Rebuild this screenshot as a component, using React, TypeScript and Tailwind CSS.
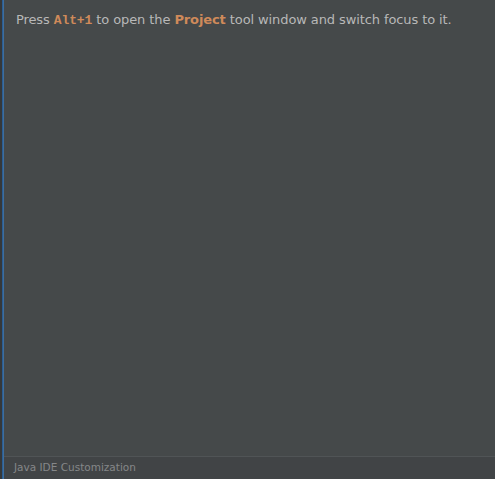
import React from 'react';

const App = () => {
  return (
    <div className="flex h-[479px] w-[495px] border-l-2 border-[#35383a] bg-[#45494a] font-['DejaVu_Sans',sans-serif]">
      <div className="w-px shrink-0 bg-[#2a5d94]" />
      <div className="w-px shrink-0 bg-[#3f6e9c]" />
      <div className="flex flex-1 flex-col">
        <div className="flex-1 pl-[12px] pt-[11px]">
          <p className="text-[13px] leading-[18px] text-[#b8b8b8] tracking-[-0.1px]">
            Press{' '}
            <span className="font-['Liberation_Mono',monospace] font-bold text-[#cf8a5a]">Alt+1</span>
            {' '}to open the{' '}
            <span className="font-bold text-[#cf8a5a]">Project</span>
            {' '}tool window and switch focus to it.
          </p>
        </div>
        <div className="flex h-[23px] items-center border-t border-[#505456] bg-[#414446] pl-[10px]">
          <span className="text-[10.5px] text-[#858789]">Java IDE Customization</span>
        </div>
      </div>
    </div>
  );
};

export default App;
